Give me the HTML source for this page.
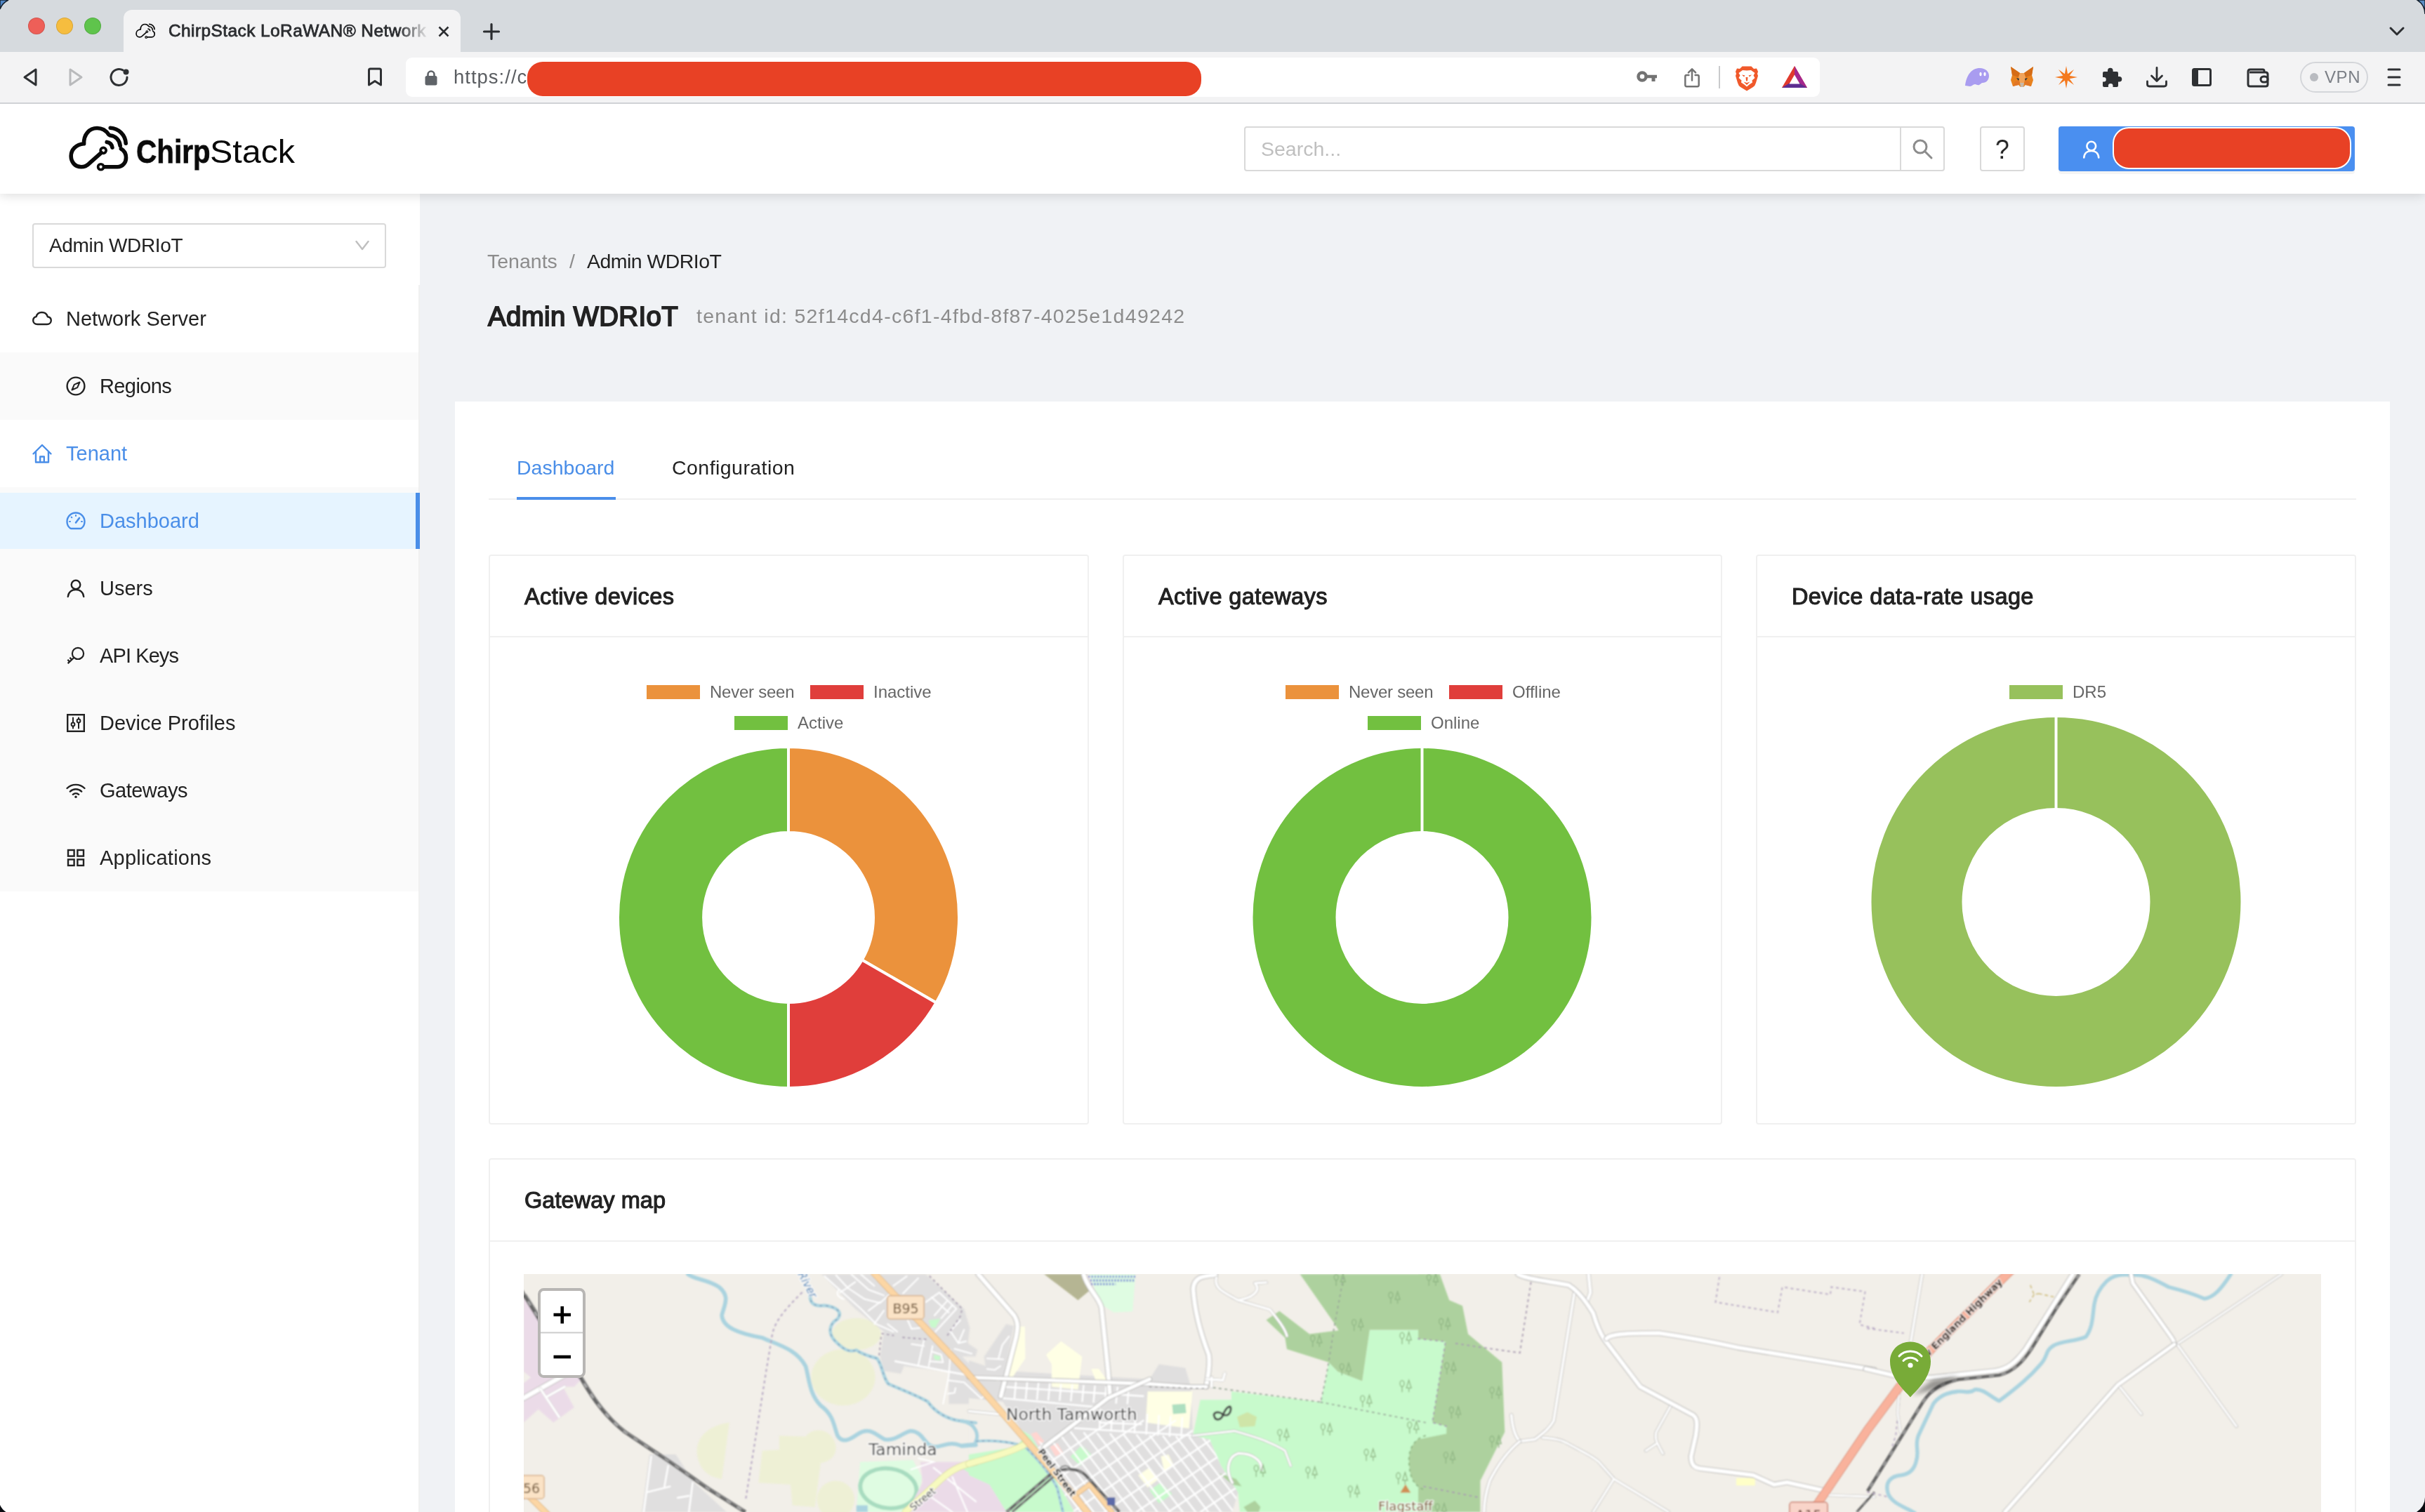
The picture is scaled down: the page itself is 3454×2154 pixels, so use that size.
<!DOCTYPE html>
<html lang="en">
<head>
<meta charset="utf-8">
<title>ChirpStack LoRaWAN® Network Server</title>
<style>
html,body{margin:0;padding:0}
body{width:3454px;height:2154px;position:relative;overflow:hidden;background:#f0f2f5;font-family:"Liberation Sans",sans-serif;color:#222;-webkit-font-smoothing:antialiased}
.abs{position:absolute}
.t{position:absolute;white-space:nowrap;line-height:1;will-change:transform}
svg{position:absolute;overflow:visible}
/* browser chrome */
#tabbar{left:0;top:0;width:3454px;height:74px;background:#d6dade}
#toolbar{left:0;top:74px;width:3454px;height:72px;background:#f3f3f4;border-bottom:2px solid #d0d2d6}
#tab{left:176px;top:14px;width:480px;height:60px;background:#f3f3f4;border-radius:12px 12px 0 0}
#urlbox{left:578px;top:82px;width:2014px;height:56px;background:#fff;border-radius:9px}
.red{background:#e84125}
/* app header */
#hdr{left:0;top:148px;width:3454px;height:128px;background:#fff;box-shadow:0 3px 14px rgba(0,0,0,.13);clip-path:inset(0 0 -60px 0)}
/* sidebar */
#side{left:0;top:276px;width:598px;height:1878px;background:#fff}
.sub{left:0;width:596px;background:#fafafa}
.mi{font-size:29px;color:#222}
.blue{color:#4a8ee8}
/* content */
#page{left:648px;top:572px;width:2756px;height:1600px;background:#fff}
.card{position:absolute;background:#fff;border:2px solid #f0f0f0;border-radius:4px;box-sizing:border-box}
.card .hd{position:absolute;left:0;top:0;right:0;height:114px;border-bottom:2px solid #f0f0f0}
.ct{font-size:32.5px;color:#222;letter-spacing:.4px;-webkit-text-stroke:1.1px #222;margin-left:1px}
.lg{font-size:24px;color:#666}
</style>
</head>
<body>
<div id="side" class="abs"></div>
<!-- ===== BROWSER CHROME ===== -->
<div id="tabbar" class="abs"></div>
<div id="tab" class="abs"></div>
<div id="toolbar" class="abs"></div>
<div id="urlbox" class="abs"></div>

<!-- traffic lights -->
<div class="abs" style="left:40px;top:25px;width:24px;height:24px;border-radius:50%;background:#ee5f58;box-shadow:inset 0 0 0 1px rgba(0,0,0,.12)"></div>
<div class="abs" style="left:80px;top:25px;width:24px;height:24px;border-radius:50%;background:#f6bd3f;box-shadow:inset 0 0 0 1px rgba(0,0,0,.12)"></div>
<div class="abs" style="left:120px;top:25px;width:24px;height:24px;border-radius:50%;background:#5fc44c;box-shadow:inset 0 0 0 1px rgba(0,0,0,.12)"></div>
<!-- tab favicon -->
<svg style="left:187.2px;top:27.4px" width="120" height="33.35" viewBox="0 0 2425 674" fill="none" stroke="#0a0a0a" stroke-width="34" stroke-linecap="round" stroke-linejoin="round">
<path d="M432 388 L318 490 C296 512 270 524 240 524 C180 524 142 478 142 420 C142 360 190 308 266 302 C262 210 320 152 392 152 C440 152 480 178 504 214"/>
<path d="M462 524 H586 C640 524 670 480 670 436 C670 396 650 366 622 350"/>
<circle cx="428" cy="524" r="27" stroke-width="25"/>
<circle cx="452" cy="366" r="27" stroke-width="25"/>
<path d="M486 286 C514 290 534 310 538 338"/>
<path d="M520 222 C570 226 610 268 614 322"/>
<path d="M520 150 C600 154 664 218 668 298"/>
</svg>
<div class="t" id="tabtitle" style="left:240px;top:32px;font-size:24.5px;color:#2b2d30;width:372px;overflow:hidden;-webkit-text-stroke:.8px #2b2d30;letter-spacing:.4px;-webkit-mask-image:linear-gradient(90deg,#000 88%,transparent 100%);mask-image:linear-gradient(90deg,#000 88%,transparent 100%);height:30px">ChirpStack LoRaWAN® Network Server</div>
<svg style="left:624px;top:37px" width="16" height="16" viewBox="0 0 16 16" stroke="#2b2d30" stroke-width="2.6" stroke-linecap="butt"><path d="M1.5 1.5 L14.5 14.5 M14.5 1.5 L1.5 14.5"/></svg>
<svg style="left:688px;top:33px" width="24" height="24" viewBox="0 0 24 24" stroke="#2b2d30" stroke-width="3.2" stroke-linecap="round"><path d="M12 1.5 V22.5 M1.5 12 H22.5"/></svg>
<svg style="left:3402px;top:37px" width="24" height="16" viewBox="0 0 24 16" fill="none" stroke="#2b2d30" stroke-width="3" stroke-linecap="round" stroke-linejoin="round"><path d="M3 3 L12 12 L21 3"/></svg>
<!-- nav -->
<svg style="left:32px;top:96px" width="24" height="28" viewBox="0 0 24 28" fill="none" stroke="#2e3033" stroke-width="3" stroke-linejoin="round"><path d="M19 3 V25 L3 14 Z"/></svg>
<svg style="left:96px;top:96px" width="24" height="28" viewBox="0 0 24 28" fill="none" stroke="#b9babc" stroke-width="3" stroke-linejoin="round"><path d="M4 3 V25 L20 14 Z"/></svg>
<svg style="left:155px;top:95px" width="30" height="30" viewBox="0 0 30 30" fill="none" stroke="#2e3033" stroke-width="3" stroke-linecap="round"><path d="M26 15 A11.5 11.5 0 1 1 20 4.9"/><circle cx="24.5" cy="7.5" r="4" fill="#2e3033" stroke="none"/></svg>
<svg style="left:523px;top:96px" width="22" height="28" viewBox="0 0 22 28" fill="none" stroke="#2e3033" stroke-width="3" stroke-linejoin="round"><path d="M2.5 4 Q2.5 2 4.5 2 H17.5 Q19.5 2 19.5 4 V25 L11 19.5 L2.5 25 Z"/></svg>
<!-- lock -->
<svg style="left:605px;top:100px" width="18" height="22" viewBox="0 0 18 22"><rect x="0.5" y="8" width="17" height="13.5" rx="2.5" fill="#5f6368"/><path d="M4.5 9 V6 A4.5 4.5 0 0 1 13.5 6 V9" fill="none" stroke="#5f6368" stroke-width="2.6"/></svg>
<div class="t" style="left:646px;top:96px;font-size:27.5px;color:#5a5d61;letter-spacing:1px">https://c</div>
<div class="abs red" style="left:751px;top:88px;width:960px;height:49px;border-radius:22px"></div>
<!-- key -->
<svg style="left:2331px;top:99px" width="30" height="22" viewBox="0 0 30 22"><circle cx="8" cy="10" r="5.5" fill="none" stroke="#737373" stroke-width="4.5"/><path d="M13 7.8 H29 V12.2 H26.5 V17 H21.5 V12.2 H13 Z" fill="#737373"/></svg>
<!-- share -->
<svg style="left:2398px;top:96px" width="24" height="29.5" viewBox="0 0 26 32" fill="none" stroke="#737373" stroke-width="2.7" stroke-linecap="round" stroke-linejoin="round"><path d="M8 12 H4.5 Q2.5 12 2.5 14 V27.5 Q2.5 29.5 4.5 29.5 H21.5 Q23.5 29.5 23.5 27.5 V14 Q23.5 12 21.5 12 H18"/><path d="M13 20 V3 M7.5 8 L13 2.5 L18.5 8"/></svg>
<div class="abs" style="left:2448px;top:94px;width:2px;height:32px;background:#c9cacc"></div>
<!-- brave lion -->
<svg style="left:2471px;top:94px" width="34" height="36" viewBox="0 0 34 36"><path d="M17 0.5 L23.5 0.5 L27 4 L31 3.5 L33 8 L32 11 L33 14 L30 24 Q29 28 26 30 L17 35.5 L8 30 Q5 28 4 24 L1 14 L2 11 L1 8 L3 3.5 L7 4 L10.5 0.5 Z" fill="#f0592b"/><path d="M17 6.5 L23 6 L28.5 10 L26.5 13.5 L28.5 17 L24.5 20.5 L25 23.5 L20.5 26.5 L17 29.5 L13.5 26.5 L9 23.5 L9.500 20.5 L5.500 17 L7.500 13.5 L5.500 10 L11 6 Z" fill="#fff"/><path d="M10 12.5 L14.500 13.500 L13 15.500 Z M24 12.500 L19.500 13.500 L21 15.500 Z M15.500 16 H18.500 L18 21 L17 21.800 L16 21 Z M12.500 22.500 L17 24 L21.500 22.500 L17 27 Z" fill="#f0592b"/></svg>
<!-- BAT -->
<svg style="left:2537px;top:93px" width="38" height="34" viewBox="0 0 38 34"><path d="M19 1 L37 32 H1 Z" fill="#e0392d"/><path d="M19 1 L37 32 L19 21 Z" fill="#a3278f"/><path d="M1 32 H37 L19 21 Z" fill="#5e2d91"/><path d="M19 13.5 L26.5 26.5 H11.5 Z" fill="#fff"/></svg>
<!-- phantom ghost -->
<svg style="left:2798px;top:95px" width="36" height="30" viewBox="0 0 36 30"><path d="M1 27 C3 12 10 2 22 2 C30 2 35 7 35 13 C35 19 31 23 26 23 C24 23 23 25 21 26 C19 27 17 25 15 25 C12 25 11 28 8 28 C5 28 4 27 1 27 Z" fill="#a99cf0"/><ellipse cx="23" cy="10.5" rx="1.6" ry="2.8" fill="#fff"/><ellipse cx="29" cy="10.5" rx="1.6" ry="2.8" fill="#fff"/></svg>
<!-- metamask fox -->
<svg style="left:2862px;top:94px" width="36" height="32" viewBox="0 0 36 32"><path d="M2 1 L15 10 H21 L34 1 L32 13 L34 20 L31 29 L23 27 L20 30 H16 L13 27 L5 29 L2 20 L4 13 Z" fill="#e8821e"/><path d="M2 1 L15 10 L13 16 L4 13 Z M34 1 L21 10 L23 16 L32 13 Z" fill="#d56c16"/><path d="M13 16 L15 10 H21 L23 16 L21 24 H15 Z" fill="#f0a35a"/><path d="M15 24 H21 L20 30 H16 Z" fill="#c8b8a8"/><path d="M10 17 L14 18 L13 21 Z M26 17 L22 18 L23 21 Z" fill="#233447"/><path d="M5 29 L13 27 L15 24 L13 21 L8 22 Z M31 29 L23 27 L21 24 L23 21 L28 22 Z" fill="#e27625"/></svg>
<!-- orange star -->
<svg style="left:2926px;top:93px" width="34" height="34" viewBox="-17 -17 34 34"><g fill="#f47a20"><path d="M0 -16 L2.4 -3 L0 0 L-2.4 -3 Z"/><path d="M0 16 L2.4 3 L0 0 L-2.4 3 Z"/><path d="M-16 0 L-3 2.4 L0 0 L-3 -2.4 Z"/><path d="M16 0 L3 2.4 L0 0 L3 -2.4 Z"/><path d="M-11 -11 L-0.5 -3.5 L0 0 L-3.5 -0.5 Z"/><path d="M11 11 L0.5 3.5 L0 0 L3.5 0.5 Z"/><path d="M11 -11 L3.5 -0.5 L0 0 L0.5 -3.5 Z"/><path d="M-11 11 L-3.5 0.5 L0 0 L-0.5 3.5 Z"/><circle r="4.5"/></g></svg>
<!-- puzzle -->
<svg style="left:2990px;top:95px" width="32" height="32" viewBox="0 0 32 32"><path d="M12 5.5 A3.8 3.8 0 0 1 19.6 5.5 V7 H25 Q27 7 27 9 V14 H28.5 A3.8 3.8 0 0 1 28.5 21.6 H27 V27 Q27 29 25 29 H19.5 V27.3 A3.3 3.3 0 0 0 12.9 27.3 V29 H7 Q5 29 5 27 V21.5 H6.5 A3.3 3.3 0 0 0 6.5 14.9 H5 V9 Q5 7 7 7 H12 Z" fill="#2e3033"/></svg>
<!-- download -->
<svg style="left:3056px;top:94px" width="32" height="32" viewBox="0 0 32 32" fill="none" stroke="#2e3033" stroke-width="2.8" stroke-linecap="round" stroke-linejoin="round"><path d="M16 2.5 V21 M8.5 14 L16 21.5 L23.5 14"/><path d="M2.5 22 V26 Q2.5 29 5.5 29 H26.5 Q29.5 29 29.5 26 V22"/></svg>
<!-- sidebar icon -->
<svg style="left:3122px;top:97px" width="28" height="26" viewBox="0 0 28 26"><rect x="1.5" y="1.5" width="25" height="23" rx="2" fill="none" stroke="#2e3033" stroke-width="3"/><rect x="1.5" y="1.5" width="7.5" height="23" fill="#2e3033"/></svg>
<!-- wallet -->
<svg style="left:3200px;top:97px" width="32" height="28" viewBox="0 0 32 28" fill="none" stroke="#2e3033" stroke-width="3" stroke-linejoin="round"><path d="M25 6 V4 Q25 2 23 2 H5 Q2 2 2 5 V23 Q2 26 5 26 H27 Q30 26 30 23 V9 Q30 6 27 6 H4"/><rect x="20" y="12" width="10" height="8" rx="4"/></svg>
<!-- VPN pill -->
<div class="abs" style="left:3276px;top:88px;width:97px;height:44px;border:2px solid #d4d6da;border-radius:22px;box-sizing:border-box"></div>
<div class="abs" style="left:3290px;top:104px;width:12px;height:12px;border-radius:50%;background:#b9bbc0"></div>
<div class="t" style="left:3311px;top:98px;font-size:24px;color:#7b7f86;letter-spacing:.6px">VPN</div>
<!-- hamburger -->
<svg style="left:3400px;top:96px" width="20" height="28" viewBox="0 0 20 28" stroke="#2e3033" stroke-width="3" stroke-linecap="round"><path d="M2 3 H18 M2 14 H18 M2 25 H18"/></svg>


<!-- ===== APP HEADER ===== -->

<div id="hdr" class="abs"></div>
<!-- logo -->
<svg style="left:80px;top:160px" width="360" height="100" viewBox="0 0 2425 674" fill="none" stroke="#0a0a0a" stroke-width="38" stroke-linecap="round" stroke-linejoin="round">
<path d="M432 388 L318 490 C296 512 270 524 240 524 C180 524 142 478 142 420 C142 360 190 308 266 302 C262 210 320 152 392 152 C440 152 480 178 504 214"/>
<path d="M462 524 H586 C640 524 670 480 670 436 C670 396 650 366 622 350"/>
<circle cx="428" cy="524" r="27" stroke-width="25"/>
<circle cx="452" cy="366" r="27" stroke-width="25"/>
<path d="M486 286 C514 290 534 310 538 338"/>
<path d="M520 222 C570 226 610 268 614 322"/>
<path d="M520 150 C600 154 664 218 668 298"/>
</svg>
<div class="t" style="left:194px;top:192px;font-size:47px;font-weight:bold;color:#0a0a0a;-webkit-text-stroke:.8px #0a0a0a;transform-origin:0 0;transform:scaleX(.86)">Chirp</div>
<div class="t" style="left:299px;top:192px;font-size:47px;color:#0a0a0a;transform-origin:0 0;transform:scaleX(1.03)">Stack</div>
<!-- search -->
<div class="abs" style="left:1772px;top:180px;width:998px;height:64px;border:2px solid #d9d9d9;border-radius:4px;box-sizing:border-box;background:#fff"></div>
<div class="abs" style="left:2706px;top:180px;width:2px;height:64px;background:#d9d9d9"></div>
<div class="t" style="left:1796px;top:197.5px;font-size:28.5px;color:#bfbfbf">Search...</div>
<svg style="left:2722px;top:196px" width="32" height="32" viewBox="0 0 32 32" fill="none" stroke="#8c8c8c" stroke-width="3" stroke-linecap="round"><circle cx="13" cy="13" r="9"/><path d="M20 20 L29 29"/></svg>
<!-- help -->
<div class="abs" style="left:2820px;top:180px;width:64px;height:64px;border:2px solid #d9d9d9;border-radius:4px;box-sizing:border-box;background:#fff"></div>
<div class="t" style="left:2841px;top:193px;font-size:39px;color:#222;transform:scaleX(.92);transform-origin:50% 50%">?</div>
<!-- user btn -->
<div class="abs" style="left:2932px;top:180px;width:422px;height:64px;border-radius:4px;background:#4a8ff0;box-shadow:0 4px 0 rgba(0,0,0,.045)"></div>
<svg style="left:2965.5px;top:198.500px" width="25.5" height="27.3" viewBox="0 0 28 30" fill="none" stroke="#fff" stroke-width="2.9" stroke-linecap="round"><circle cx="14" cy="10" r="7"/><path d="M2.5 28 C3 21 8 17.5 14 17.5 C20 17.5 25 21 25.5 28"/></svg>
<div class="abs red" style="left:3009px;top:181px;width:340px;height:60px;border-radius:23px;border:2px solid #fff;box-sizing:border-box"></div>


<!-- ===== SIDEBAR ===== -->


<div class="abs" style="left:596px;top:406px;width:2px;height:1748px;background:#f0f0f0"></div>
<div class="abs sub" style="top:502px;height:96px"></div>
<div class="abs sub" style="top:694px;height:576px"></div>
<div class="abs" style="left:0;top:702px;width:598px;height:80px;background:#e6f4ff"></div>
<div class="abs" style="left:592px;top:702px;width:6px;height:80px;background:#4a8ee8"></div>
<!-- tenant select -->
<div class="abs" style="left:46px;top:318px;width:504px;height:64px;border:2px solid #d9d9d9;border-radius:4px;box-sizing:border-box;background:#fff"></div>
<div class="t" style="left:70px;top:336px;font-size:28px;color:#222;letter-spacing:-.35px">Admin WDRIoT</div>
<svg style="left:506px;top:342px" width="20" height="16" viewBox="0 0 20 16" fill="none" stroke="#bfbfbf" stroke-width="2.4" stroke-linecap="round" stroke-linejoin="round"><path d="M1.5 2 L10 13 L18.5 2"/></svg>
<div class="t mi " style="left:94px;top:440px">Network Server</div>
<div class="t mi " style="left:142px;top:536px;letter-spacing:-.6px">Regions</div>
<div class="t mi blue" style="left:94px;top:632px">Tenant</div>
<div class="t mi blue" style="left:142px;top:728px">Dashboard</div>
<div class="t mi " style="left:142px;top:824px">Users</div>
<div class="t mi " style="left:142px;top:920px;letter-spacing:-.9px">API Keys</div>
<div class="t mi " style="left:142px;top:1016px">Device Profiles</div>
<div class="t mi " style="left:142px;top:1112px;letter-spacing:-.5px">Gateways</div>
<div class="t mi " style="left:142px;top:1208px;letter-spacing:.25px">Applications</div>
<!--SIDE-ICONS-START--><svg style="left:46px;top:440px" width="28" height="28" viewBox="0 0 28 28" fill="none" stroke="#222" stroke-width="2.4" stroke-linecap="round" stroke-linejoin="round"><path d="M7.5 22 C3.5 22 1.2 19.5 1.2 16.5 C1.2 13.8 3 11.8 5.6 11.2 C6.6 7.2 9.8 5 13.6 5 C17.6 5 20.8 7.4 21.8 11.2 C24.8 11.6 26.8 13.8 26.8 16.6 C26.8 19.6 24.4 22 21 22 Z"/></svg>
<svg style="left:94px;top:536px" width="28" height="28" viewBox="0 0 28 28" fill="none" stroke="#222" stroke-width="2.4" stroke-linecap="round" stroke-linejoin="round"><circle cx="14" cy="14" r="12.4"/><path d="M19.5 8.5 L16.2 16.2 L8.5 19.5 L11.8 11.8 Z" stroke-width="2"/></svg>
<svg style="left:46px;top:632px" width="28" height="28" viewBox="0 0 28 28" fill="none" stroke="#4a8ee8" stroke-width="2.4" stroke-linecap="round" stroke-linejoin="round"><path d="M1.5 14.5 L14 2 L26.5 14.5"/><path d="M5 12 V26.5 H23 V12"/><path d="M11.2 26 V18.5 H16.8 V26"/></svg>
<svg style="left:94px;top:728px" width="28" height="28" viewBox="0 0 28 28" fill="none" stroke="#4a8ee8" stroke-width="2.4" stroke-linecap="round" stroke-linejoin="round"><path d="M6 24.5 C3 22.3 1.5 18.8 1.5 15 C1.5 8.1 7.1 2.5 14 2.5 C20.9 2.5 26.5 8.1 26.5 15 C26.5 18.8 25 22.3 22 24.5 Q21.3 25 20.5 25 H7.5 Q6.7 25 6 24.5 Z"/><path d="M14 16.5 L19 10" stroke-width="2.6"/><path d="M14 6 V7 M7.6 8.6 L8.3 9.3 M5 15 H6 M22 15 H23" stroke-width="2"/></svg>
<svg style="left:94px;top:824px" width="28" height="28" viewBox="0 0 28 28" fill="none" stroke="#222" stroke-width="2.4" stroke-linecap="round" stroke-linejoin="round"><circle cx="14" cy="9" r="6.3"/><path d="M2.8 26 C3.3 19.8 8 16 14 16 C20 16 24.7 19.8 25.2 26"/></svg>
<svg style="left:94px;top:920px" width="28" height="28" viewBox="0 0 28 28" fill="none" stroke="#222" stroke-width="2.4" stroke-linecap="round" stroke-linejoin="round"><circle cx="17" cy="10.9" r="8.1" stroke-width="2.2"/><path d="M11.2 17 L2.6 25.2 M8.2 19.8 L5.4 16.8 M5.1 22.7 L2.4 19.8" stroke-linecap="butt" stroke-width="2.3"/></svg>
<svg style="left:94px;top:1016px" width="28" height="28" viewBox="0 0 28 28" fill="none" stroke="#222" stroke-width="2.4" stroke-linecap="round" stroke-linejoin="round"><rect x="2.2" y="2.2" width="23.6" height="23.6" stroke-linejoin="miter"/><path d="M10 6.5 V13 M10 19 V21.5 M18 6.500 V8 M18 14 V21.5" stroke-width="2"/><circle cx="10" cy="16" r="2.4" stroke-width="2"/><circle cx="18" cy="11" r="2.4" stroke-width="2"/></svg>
<svg style="left:94px;top:1112px" width="28" height="28" viewBox="0 0 28 28" fill="none" stroke="#222" stroke-width="2.4" stroke-linecap="round" stroke-linejoin="round"><path d="M1.5 11 C8.500 4.200 19.500 4.200 26.500 11"/><path d="M5.800 15.600 C10.400 11.200 17.600 11.200 22.200 15.600"/><path d="M9.800 19.800 C12.200 17.600 15.800 17.600 18.200 19.800"/><circle cx="14" cy="23.300" r="1.700" fill="#222" stroke="none"/></svg>
<svg style="left:94px;top:1208px" width="28" height="28" viewBox="0 0 28 28" fill="none" stroke="#222" stroke-width="2.4" stroke-linecap="round" stroke-linejoin="round"><rect stroke-linejoin="miter" x="3" y="3" width="8.600" height="8.600"/><rect stroke-linejoin="miter" x="16.400" y="3" width="8.600" height="8.600"/><rect stroke-linejoin="miter" x="3" y="16.400" width="8.600" height="8.600"/><rect stroke-linejoin="miter" x="16.400" y="16.400" width="8.600" height="8.600"/></svg>
<!--SIDE-ICONS-END-->


<!-- ===== CONTENT ===== -->
<div id="page" class="abs"></div>

<!-- breadcrumb -->
<div class="t" style="left:694px;top:358px;font-size:28.5px;color:#8c8c8c">Tenants</div>
<div class="t" style="left:811px;top:358px;font-size:28.5px;color:#8c8c8c">/</div>
<div class="t" style="left:836px;top:358px;font-size:28.5px;color:#222;letter-spacing:-.55px">Admin WDRIoT</div>
<div class="t" style="left:693px;top:432px;font-size:38.5px;color:#222;letter-spacing:.3px;-webkit-text-stroke:1.8px #222;margin-left:2px">Admin WDRIoT</div>
<div class="t" style="left:992px;top:436px;font-size:28.5px;color:#8c8c8c;letter-spacing:1.3px">tenant id: 52f14cd4-c6f1-4fbd-8f87-4025e1d49242</div>
<!-- tabs -->
<div class="abs" style="left:696px;top:710px;width:2660px;height:2px;background:#f0f0f0"></div>
<div class="t blue" style="left:736px;top:652px;font-size:28.5px">Dashboard</div>
<div class="abs" style="left:736px;top:708px;width:141px;height:4px;background:#4a8eea"></div>
<div class="t" style="left:957px;top:652px;font-size:28.5px;color:#222;letter-spacing:.45px">Configuration</div>
<!-- cards -->
<div class="card" style="left:696px;top:790px;width:854.67px;height:812px"><div class="hd"></div></div>
<div class="card" style="left:1598.67px;top:790px;width:854.67px;height:812px"><div class="hd"></div></div>
<div class="card" style="left:2501.33px;top:790px;width:854.67px;height:812px"><div class="hd"></div></div>
<div class="t ct" style="left:746px;top:834px">Active devices</div>
<div class="t ct" style="left:1649px;top:834px">Active gateways</div>
<div class="t ct" style="left:2551px;top:834px">Device data-rate usage</div>
<!-- legends -->
<div class="abs" style="left:921px;top:976px;width:76px;height:20px;background:#eb923c"></div>
<div class="t lg" style="left:1011px;top:974px;letter-spacing:-.25px">Never seen</div>
<div class="abs" style="left:1154px;top:976px;width:76px;height:20px;background:#e03e3b"></div>
<div class="t lg" style="left:1244px;top:974px">Inactive</div>
<div class="abs" style="left:1046px;top:1020px;width:76px;height:20px;background:#72c040"></div>
<div class="t lg" style="left:1136px;top:1018px">Active</div>

<div class="abs" style="left:1831px;top:976px;width:76px;height:20px;background:#eb923c"></div>
<div class="t lg" style="left:1921px;top:974px;letter-spacing:-.25px">Never seen</div>
<div class="abs" style="left:2064px;top:976px;width:76px;height:20px;background:#e03e3b"></div>
<div class="t lg" style="left:2154px;top:974px">Offline</div>
<div class="abs" style="left:1948px;top:1020px;width:76px;height:20px;background:#72c040"></div>
<div class="t lg" style="left:2038px;top:1018px">Online</div>

<div class="abs" style="left:2862px;top:976px;width:76px;height:20px;background:#97c15c"></div>
<div class="t lg" style="left:2952px;top:974px">DR5</div>
<!--DONUTS-START--><svg style="left:0;top:0" width="3454" height="2154" viewBox="0 0 3454 2154"><path d="M1123.00 1064.00 A243 243 0 0 1 1333.44 1428.50 L1227.79 1367.50 A121 121 0 0 0 1123.00 1186.00 Z" fill="#eb923c" stroke="#fff" stroke-width="4" stroke-linejoin="round"/><path d="M1333.44 1428.50 A243 243 0 0 1 1123.00 1550.00 L1123.00 1428.00 A121 121 0 0 0 1227.79 1367.50 Z" fill="#e03e3b" stroke="#fff" stroke-width="4" stroke-linejoin="round"/><path d="M1123.00 1550.00 A243 243 0 0 1 1123.00 1064.00 L1123.00 1186.00 A121 121 0 0 0 1123.00 1428.00 Z" fill="#72c040" stroke="#fff" stroke-width="4" stroke-linejoin="round"/></svg><svg style="left:0;top:0" width="3454" height="2154" viewBox="0 0 3454 2154"><circle cx="2025.5" cy="1307" r="182.0" fill="none" stroke="#72c040" stroke-width="118"/><path d="M2025.5 1063 V1187" stroke="#fff" stroke-width="4"/></svg><svg style="left:0;top:0" width="3454" height="2154" viewBox="0 0 3454 2154"><circle cx="2928.5" cy="1285" r="198.5" fill="none" stroke="#97c15c" stroke-width="129"/><path d="M2928.5 1019 V1154" stroke="#fff" stroke-width="4"/></svg><!--DONUTS-END-->
<!-- gateway map card -->
<div class="card" style="left:696px;top:1650px;width:2660px;height:600px"><div class="hd" style="height:115px"></div></div>
<div class="t ct" style="left:746px;top:1694px;letter-spacing:.05px">Gateway map</div>


<!--MAP-START--><svg style="left:0;top:0" width="3454" height="2154" viewBox="0 0 3454 2154">
<defs><clipPath id="mapclip"><rect x="746" y="1815" width="2560" height="340"/></clipPath>
<clipPath id="gridclip"><path d="M330 900 L420 960 L740 700 L960 610 L1180 640 L1190 900 L1280 920 L1340 1060 L1430 1200 L1400 1306 L560 1306Z"/></clipPath>
<filter id="sblur" x="-20%" y="-40%" width="140%" height="180%"><feGaussianBlur stdDeviation="3.2"/></filter>
<filter id="mblur" x="-1%" y="-1%" width="102%" height="102%"><feGaussianBlur stdDeviation="0.9"/></filter></defs>
<g clip-path="url(#mapclip)"><rect x="746" y="1815" width="2560" height="340" fill="#f2efe9"/>
<g filter="url(#mblur)">
<g transform="translate(740,1804) scale(0.26804)"><path d="M22 170 L110 300 L330 600 L290 640 L230 640 L290 750 L180 830 L100 760 L22 830Z" fill="#ebdbe8"/><path d="M22 620 L60 590 L22 560Z" fill="#f2efe9"/><ellipse cx="1790" cy="360" rx="130" ry="85" fill="#eef0d5"/><ellipse cx="1720" cy="590" rx="170" ry="150" fill="#eef0d5"/><path d="M1115 830 C980 850 930 930 945 1010 C960 1080 1000 1120 1075 1130Z" fill="#eef0d5"/><path d="M1380 900 L1520 905 C1560 850 1660 860 1680 950 C1690 1010 1640 1040 1600 1045 L1570 1280 L1450 1270 L1440 1160 L1270 1150 L1290 980 L1380 975Z" fill="#eef0d5"/><circle cx="1680" cy="1240" r="100" fill="#eef0d5"/><path d="M690 1000 L830 1000 L930 1150 L1100 1306 L650 1306Z" fill="#e0dfdf"/><path d="M1810 1040 L2090 1030 L2140 1120 L2100 1306 L1790 1306Z" fill="#dffce2"/><ellipse cx="1960" cy="1180" rx="150" ry="105" fill="none" stroke="#a8dcc0" stroke-width="22" transform="rotate(8 1960 1180)"/><path d="M2130 1040 L2425 1040 L2425 1306 L2060 1306 L2140 1150Z" fill="#ebdbe8"/><path d="M2330 1060 L2425 1040 L2425 1120Z" fill="#c8facc"/><path d="M1790 1270 L1850 1270 L1850 1306 L1790 1306Z" fill="#aad3df"/></g>
<g transform="translate(1150,1810) scale(0.13609)"><path d="M150 40 L1240 40 L1420 200 L1640 400 L1700 600 L1680 760 L1780 830 L1760 900 L1620 900 L2000 1300 L2000 1396 L1480 1396 L1480 1060 L1010 1000 L980 1080 L800 1050 L760 900 L800 640 L500 400Z" fill="#e0dfdf"/><path d="M1850 900 L2080 560 L2160 580 L2100 900 L2050 1100 L1870 1060Z" fill="#e0dfdf"/><path d="M1270 520 L1390 505 L1340 600 L1290 590Z" fill="#c8facc"/><path d="M1320 880 L1400 900 L1380 940 L1330 930Z" fill="#c8facc"/></g>
<g transform="translate(1380,1804) scale(0.26804)"><path d="M0 500 L120 540 L260 560 L960 600 L1010 520 L1150 540 L1180 640 L1190 900 L1280 920 L1340 1060 L1430 1200 L1400 1306 L560 1306 L330 900 L0 700Z" fill="#e0dfdf"/><path d="M0 700 L330 900 L560 1306 L0 1306Z" fill="#c8facc"/><path d="M0 1110 L110 1160 L200 1306 L0 1306Z" fill="#ebdbe8"/><path d="M0 700 L180 720 L300 900 L250 960 L0 1000Z" fill="#f2efe9"/><path d="M1230 710 L1395 710 L1395 665 L1870 722 L1900 580 L1912 510 L1960 560 L2090 610 L2130 338 L2425 338 L2425 1306 L1440 1306 L1430 1200 L1340 1060 L1280 920 L1190 900Z" fill="#c8facc"/><path d="M1760 42 L2425 42 L2425 338 L2130 338 L2090 610 L1960 560 L1912 510 L1690 440 L1680 380 L1580 285 L1650 238 L1810 360 L1965 340 L1940 300Z" fill="#add19e"/><path d="M2425 900 C2360 920 2330 980 2340 1060 C2345 1130 2370 1170 2425 1190Z" fill="#add19e"/><path d="M1330 1100 L1420 1130 L1450 1170 L1400 1160Z" fill="#add19e"/><path d="M1460 1280 L1520 1245 L1550 1280 L1540 1306 L1480 1306Z" fill="#add19e"/><path d="M400 42 L610 42 L640 130 L580 180Z" fill="#b5b593"/><path d="M640 42 L885 42 L870 240 L770 245 L700 200Z" fill="#dffce2"/><path d="M620 55 H885 M630 75 H880 M650 95 H780" stroke="#2d3bd0" stroke-width="12" stroke-dasharray="7 9" fill="none" opacity=".8"/><path d="M270 320 L298 320 L300 490 L225 600 L205 590 L240 400Z" fill="#ffffe5"/><path d="M410 470 L490 398 L602 480 L580 655 L440 640 L440 520Z" fill="#ffffe5"/><path d="M650 545 L690 545 L730 600 L720 630 L680 620Z" fill="#ffffe5"/><path d="M950 665 L1188 665 L1170 862 L940 830Z" fill="#ffffe5"/><path d="M1080 735 L1150 730 L1155 780 L1085 785Z" fill="#aedfc0"/><path d="M900 1110 L960 1070 L1010 1130 L950 1175Z" fill="#ffffe5"/><path d="M1020 1010 L1060 1000 L1090 1060 L1040 1095Z" fill="#ffffe5"/><path d="M330 890 L360 880 L400 930 L370 950 M430 960 L470 940 L500 990 L460 1010Z" fill="#ffd6d1"/><path d="M540 1010 L600 950 L650 1000 L590 1060Z" fill="#c8facc"/><path d="M960 1190 L1020 1150 L1080 1210 L1010 1260Z" fill="#c8facc"/><path d="M1425 800 L1480 775 L1530 800 L1520 850 L1440 855Z" fill="#cfe5a8"/></g>
<g transform="translate(2020,1804) scale(0.26804)"><path d="M0 42 L115 42 L165 180 L235 210 L265 360 L445 510 L460 880 L330 1140 L330 1306 L0 1306Z" fill="#add19e"/><path d="M0 385 L145 400 L75 830 L150 850 L150 890 L0 920Z" fill="#c8facc"/><path d="M1690 1125 L1790 1125 L1790 1165 L1690 1165Z" fill="#ffffc8"/></g>
<g transform="translate(740,1804) scale(0.26804)"><path d="M895 42 C930 70 1000 70 1060 110 C1120 160 1090 200 1075 260 C1080 330 1180 360 1290 380 C1380 420 1470 440 1520 530 C1540 600 1540 680 1600 740 C1670 790 1670 850 1690 900 C1720 950 1770 910 1800 890 C1860 850 1900 900 1940 920 C2000 930 2040 880 2080 875 C2150 880 2150 960 2210 960 C2270 950 2290 930 2350 955 L2425 950" fill="none" stroke="#aad3df" stroke-width="21" stroke-linecap="round" stroke-linejoin="round"/><path d="M1545 150 C1540 200 1570 215 1620 208 C1680 215 1720 240 1690 280 C1640 310 1640 360 1680 400 C1720 440 1750 460 1790 445 C1820 470 1870 480 1900 490 C1930 530 1930 590 1960 625 C2040 660 2120 690 2170 720 C2210 780 2280 810 2330 820 L2425 832" fill="none" stroke="#aad3df" stroke-width="17" stroke-linecap="round" stroke-linejoin="round"/><path d="M1545 150 C1540 200 1570 215 1620 208 C1680 215 1720 240 1690 280 C1640 310 1640 360 1680 400 C1720 440 1750 460 1790 445 C1820 470 1870 480 1900 490 C1930 530 1930 590 1960 625 C2040 660 2120 690 2170 720 C2210 780 2280 810 2330 820 L2425 832" fill="none" stroke="#7d98b8" stroke-width="5" stroke-dasharray="9 22" stroke-linecap="round"/><path d="M1500 140 C1400 240 1350 300 1340 380 L1310 560 L1280 750 L1240 1000 L1200 1250" fill="none" stroke="#b7a9c4" stroke-width="8" stroke-dasharray="9 22" stroke-linecap="round"/><path d="M700 1010 L660 1306 M790 1060 L770 1170 M920 1150 L900 1306 M680 1200 L800 1170 M840 1230 L900 1220" fill="none" stroke="#fff" stroke-width="9" stroke-linecap="round"/><path d="M2200 1070 L2425 1250 M2300 1120 L2380 1306 M2150 1200 L2300 1306 M2080 1080 L2200 1040 L2120 1020" fill="none" stroke="#fff" stroke-width="8" stroke-linecap="round"/><path d="M22 700 L270 560" fill="none" stroke="#bcbbb9" stroke-width="32" stroke-linecap="round" stroke-linejoin="round"/><path d="M22 700 L270 560" fill="none" stroke="#fff" stroke-width="24" stroke-linecap="round" stroke-linejoin="round"/><path d="M110 650 L210 800 M150 690 L240 640" fill="none" stroke="#bcbbb9" stroke-width="15" stroke-linecap="round" stroke-linejoin="round"/><path d="M110 650 L210 800 M150 690 L240 640" fill="none" stroke="#fff" stroke-width="13" stroke-linecap="round" stroke-linejoin="round"/><path d="M2425 1040 C2330 1060 2280 1090 2210 1160 L2050 1306" fill="none" stroke="#d8d99a" stroke-width="36" stroke-linecap="round" stroke-linejoin="round"/><path d="M2425 1040 C2330 1060 2280 1090 2210 1160 L2050 1306" fill="none" stroke="#f7fabf" stroke-width="31" stroke-linecap="round" stroke-linejoin="round"/><path d="M60 1230 L150 1320" fill="none" stroke="#d9b27c" stroke-width="34" stroke-linecap="round" stroke-linejoin="round"/><path d="M60 1230 L150 1320" fill="none" stroke="#fcd6a4" stroke-width="28" stroke-linecap="round" stroke-linejoin="round"/><path d="M10 130 L110 290 L330 600 C400 720 460 800 560 880 L800 1040 L1000 1180 L1200 1306" fill="none" stroke="#666" stroke-width="20" stroke-linejoin="round"/><path d="M10 130 L110 290 L330 600 C400 720 460 800 560 880 L800 1040 L1000 1180 L1200 1306" fill="none" stroke="#b9b9b9" stroke-width="8" stroke-dasharray="26 40" stroke-linejoin="round"/><path d="M20 160 L110 300 L320 600 C390 720 450 800 550 890 L790 1050 L990 1190 L1180 1306" fill="none" stroke="#8a8a8a" stroke-width="5" transform="translate(14,-12)"/></g>
<g transform="translate(1150,1810) scale(0.13609)"><path d="M180 60 L560 400 L720 560 L900 640 M300 50 L420 180 L600 300 L760 340 L860 250 M460 40 L640 200 L800 260 M560 40 L700 160 M330 200 Q280 260 380 300 M640 420 L760 330 M700 560 L800 420 M840 560 L940 640 M420 180 L340 230 M500 120 L430 170 M900 160 L1040 60 M1000 240 L1160 80 M1240 330 L1380 230 L1560 400 L1340 640 M1300 280 L1480 440 M1330 470 L1460 320 M1400 500 L1520 360 M1490 640 L1600 520 M1500 640 L1580 760 L1640 620 M1580 760 L1660 740 M1540 820 L1720 870 M1050 520 L1090 610 L1180 600 M1090 770 L1220 790 M1220 730 L1160 990 M1310 790 L1270 1000 M1280 950 L1420 960 L1400 880 L1310 850 M1500 830 L1480 1100 L1420 1396 M1480 1150 L1640 1170 L1820 1340 L1860 1300 M1470 1290 L1540 1280 L1550 1230 M2110 690 L2040 780 L2000 920 M1880 920 L2050 930 M1880 1030 L1960 1040 L2020 1000" fill="none" stroke="#fff" stroke-width="15" stroke-linecap="round" stroke-linejoin="round"/><path d="M920 950 L1480 1060 L2000 1150" fill="none" stroke="#fff" stroke-width="20" stroke-linecap="round"/><path d="M1280 60 L1330 110 L1620 400 L1600 480 L1450 700 M780 660 L900 680 M1000 700 L1240 720 M770 700 L750 900" fill="none" stroke="#a89bb0" stroke-width="14" stroke-dasharray="16 40" stroke-linecap="round"/></g>
<g transform="translate(1380,1804) scale(0.26804)"><g clip-path="url(#gridclip)"><path d="M-300 1306 L420 818 M-130 1306 L590 818 M40 1306 L760 818 M210 1306 L930 818 M380 1306 L1100 818 M550 1306 L1270 818 M720 1306 L1440 818 M890 1306 L1610 818 M1060 1306 L1780 818 M1230 1306 L1950 818 M1400 1306 L2120 818 M1570 1306 L2290 818 M120 861 L460 1306 M190 864 L530 1309 M260 867 L600 1312 M330 870 L670 1315 M400 873 L740 1318 M470 876 L810 1321 M540 879 L880 1324 M610 882 L950 1327 M680 885 L1020 1330 M750 888 L1090 1333 M820 891 L1160 1336 M890 894 L1230 1339 M960 897 L1300 1342 M1030 900 L1370 1345 M1100 903 L1440 1348 M1170 906 L1510 1351 M1240 909 L1580 1354 M1310 912 L1650 1357 M1380 915 L1720 1360 " fill="none" stroke="#fff" stroke-width="9"/></g><path d="M180 640 L930 690 M170 700 L700 750 M560 860 L1190 900 M690 830 L920 840 M190 610 L182 700 M250 613 L242 703 M310 616 L302 706 M370 619 L362 709 M430 622 L422 712 M490 625 L482 715 M550 628 L542 718 M610 631 L602 721 M670 634 L662 724 M730 637 L722 727 M790 640 L782 730 M850 643 L842 733 M700 760 L694 870 M762 766 L756 876 M824 772 L818 882 M886 778 L880 888 M948 784 L942 894 M1010 790 L1004 900 M1072 796 L1066 906 M1134 802 L1128 912 " fill="none" stroke="#fff" stroke-width="9"/><path d="M0 770 L200 790" fill="none" stroke="#bcbbb9" stroke-width="17" stroke-linecap="round" stroke-linejoin="round"/><path d="M0 770 L200 790" fill="none" stroke="#fff" stroke-width="13" stroke-linecap="round" stroke-linejoin="round"/><path d="M50 42 L240 260 C265 300 260 330 250 380 L170 690" fill="none" stroke="#bcbbb9" stroke-width="30" stroke-linecap="round" stroke-linejoin="round"/><path d="M50 42 L240 260 C265 300 260 330 250 380 L170 690" fill="none" stroke="#fff" stroke-width="22" stroke-linecap="round" stroke-linejoin="round"/><path d="M610 42 C630 120 690 160 705 220 L740 560 L750 690" fill="none" stroke="#bcbbb9" stroke-width="30" stroke-linecap="round" stroke-linejoin="round"/><path d="M610 42 C630 120 690 160 705 220 L740 560 L750 690" fill="none" stroke="#fff" stroke-width="22" stroke-linecap="round" stroke-linejoin="round"/><path d="M1310 46 C1240 50 1195 60 1192 120 C1200 250 1240 380 1275 470 C1285 540 1265 600 1262 640" fill="none" stroke="#bcbbb9" stroke-width="30" stroke-linecap="round" stroke-linejoin="round"/><path d="M1310 46 C1240 50 1195 60 1192 120 C1200 250 1240 380 1275 470 C1285 540 1265 600 1262 640" fill="none" stroke="#fff" stroke-width="22" stroke-linecap="round" stroke-linejoin="round"/><path d="M0 590 L960 625 L1180 640 L1262 640" fill="none" stroke="#bcbbb9" stroke-width="26" stroke-linecap="round" stroke-linejoin="round"/><path d="M0 590 L960 625 L1180 640 L1262 640" fill="none" stroke="#fff" stroke-width="18" stroke-linecap="round" stroke-linejoin="round"/><path d="M960 600 L740 700 L400 960" fill="none" stroke="#bcbbb9" stroke-width="28" stroke-linecap="round" stroke-linejoin="round"/><path d="M960 600 L740 700 L400 960" fill="none" stroke="#fff" stroke-width="20" stroke-linecap="round" stroke-linejoin="round"/><path d="M1262 600 L1350 605 L1360 570 M1290 590 L1290 640" fill="none" stroke="#bcbbb9" stroke-width="17" stroke-linecap="round" stroke-linejoin="round"/><path d="M1262 600 L1350 605 L1360 570 M1290 590 L1290 640" fill="none" stroke="#fff" stroke-width="13" stroke-linecap="round" stroke-linejoin="round"/><path d="M1315 60 C1300 120 1360 140 1430 180 C1500 170 1560 130 1520 90 L1580 85 M1430 180 L1600 230 C1640 280 1680 330 1690 370" fill="none" stroke="#bcbbb9" stroke-width="17" stroke-linecap="round" stroke-linejoin="round"/><path d="M1315 60 C1300 120 1360 140 1430 180 C1500 170 1560 130 1520 90 L1580 85 M1430 180 L1600 230 C1640 280 1680 330 1690 370" fill="none" stroke="#fff" stroke-width="12" stroke-linecap="round" stroke-linejoin="round"/><path d="M1190 900 L1410 875 C1500 900 1600 930 1680 980 L1710 1060" fill="none" stroke="#bcbbb9" stroke-width="15" stroke-linecap="round" stroke-linejoin="round"/><path d="M1190 900 L1410 875 C1500 900 1600 930 1680 980 L1710 1060" fill="none" stroke="#fff" stroke-width="10" stroke-linecap="round" stroke-linejoin="round"/><path d="M1400 1150 C1360 1080 1380 1010 1430 995 C1500 990 1560 1030 1555 1080" fill="none" stroke="#bcbbb9" stroke-width="17" stroke-linecap="round" stroke-linejoin="round"/><path d="M1400 1150 C1360 1080 1380 1010 1430 995 C1500 990 1560 1030 1555 1080" fill="none" stroke="#fff" stroke-width="12" stroke-linecap="round" stroke-linejoin="round"/><path d="M1300 645 L1870 722 L1900 580 L1912 510 M1870 722 L2425 830 M1990 60 L1940 330 L1912 510" fill="none" stroke="#9aa89a" stroke-width="7" stroke-dasharray="9 22" stroke-linecap="round"/><path d="M2425 900 C2360 920 2330 980 2340 1060 C2345 1130 2370 1170 2425 1190" fill="none" stroke="#8fb583" stroke-width="7" stroke-dasharray="9 22" stroke-linecap="round"/><path d="M960 640 L1262 650" fill="none" stroke="#9a9a9a" stroke-width="6" stroke-dasharray="9 22" stroke-linecap="round"/><path d="M-40 822 C40 835 60 900 30 945 L-40 952" fill="none" stroke="#aad3df" stroke-width="19" stroke-linecap="round" stroke-linejoin="round"/><path d="M40 930 C150 920 250 940 300 960 C380 1040 430 1100 470 1180 L500 1306" fill="none" stroke="#aad3df" stroke-width="15" stroke-linecap="round" stroke-linejoin="round"/><path d="M40 930 C150 920 250 940 300 960 C380 1040 430 1100 470 1180 L500 1306" fill="none" stroke="#7d98b8" stroke-width="5" stroke-dasharray="9 22" stroke-linecap="round"/><path d="M0 1050 C100 1020 220 990 300 945" fill="none" stroke="#d8d99a" stroke-width="36" stroke-linecap="round" stroke-linejoin="round"/><path d="M0 1050 C100 1020 220 990 300 945" fill="none" stroke="#f7fabf" stroke-width="31" stroke-linecap="round" stroke-linejoin="round"/><path d="M560 1220 L640 1160 L760 1306" fill="none" stroke="#d9b27c" stroke-width="28" stroke-linecap="round" stroke-linejoin="round"/><path d="M560 1220 L640 1160 L760 1306" fill="none" stroke="#fcd6a4" stroke-width="22" stroke-linecap="round" stroke-linejoin="round"/><path d="M200 1306 L440 1100 C500 1070 580 1070 620 1110 L800 1306" fill="none" stroke="#666" stroke-width="16" stroke-linejoin="round"/><path d="M200 1306 L440 1100 C500 1070 580 1070 620 1110 L800 1306" fill="none" stroke="#b9b9b9" stroke-width="4" stroke-dasharray="26 40" stroke-linejoin="round"/><path d="M230 1306 L460 1110" fill="none" stroke="#666" stroke-width="12" stroke-linejoin="round"/><path d="M230 1306 L460 1110" fill="none" stroke="#b9b9b9" stroke-width="3" stroke-dasharray="26 40" stroke-linejoin="round"/><path d="M470 1100 C480 1050 540 1050 540 1085" fill="none" stroke="#6b6b6b" stroke-width="6"/><rect x="735" y="1228" width="42" height="42" fill="#5b6aa8"/><path d="M1305 800 C1290 770 1340 770 1350 790 C1370 740 1400 730 1390 770 C1380 800 1360 790 1350 790 C1340 820 1310 820 1305 800Z" fill="none" stroke="#444" stroke-width="11"/><g transform="translate(1970,70)" fill="none" stroke="#8fb583" stroke-width="5"><ellipse cx="-18" cy="-12" rx="11" ry="16"/><path d="M-18 4 V34"/><path d="M18 -30 L5 12 H31 Z M18 12 V34"/></g><g transform="translate(2260,165)" fill="none" stroke="#8fb583" stroke-width="5"><ellipse cx="-18" cy="-12" rx="11" ry="16"/><path d="M-18 4 V34"/><path d="M18 -30 L5 12 H31 Z M18 12 V34"/></g><g transform="translate(2065,310)" fill="none" stroke="#8fb583" stroke-width="5"><ellipse cx="-18" cy="-12" rx="11" ry="16"/><path d="M-18 4 V34"/><path d="M18 -30 L5 12 H31 Z M18 12 V34"/></g><g transform="translate(1845,395)" fill="none" stroke="#8fb583" stroke-width="5"><ellipse cx="-18" cy="-12" rx="11" ry="16"/><path d="M-18 4 V34"/><path d="M18 -30 L5 12 H31 Z M18 12 V34"/></g><g transform="translate(2320,380)" fill="none" stroke="#8fb583" stroke-width="5"><ellipse cx="-18" cy="-12" rx="11" ry="16"/><path d="M-18 4 V34"/><path d="M18 -30 L5 12 H31 Z M18 12 V34"/></g><g transform="translate(2000,545)" fill="none" stroke="#8fb583" stroke-width="5"><ellipse cx="-18" cy="-12" rx="11" ry="16"/><path d="M-18 4 V34"/><path d="M18 -30 L5 12 H31 Z M18 12 V34"/></g><g transform="translate(2320,635)" fill="none" stroke="#8fb583" stroke-width="5"><ellipse cx="-18" cy="-12" rx="11" ry="16"/><path d="M-18 4 V34"/><path d="M18 -30 L5 12 H31 Z M18 12 V34"/></g><g transform="translate(2110,715)" fill="none" stroke="#8fb583" stroke-width="5"><ellipse cx="-18" cy="-12" rx="11" ry="16"/><path d="M-18 4 V34"/><path d="M18 -30 L5 12 H31 Z M18 12 V34"/></g><g transform="translate(1900,865)" fill="none" stroke="#8fb583" stroke-width="5"><ellipse cx="-18" cy="-12" rx="11" ry="16"/><path d="M-18 4 V34"/><path d="M18 -30 L5 12 H31 Z M18 12 V34"/></g><g transform="translate(1670,895)" fill="none" stroke="#8fb583" stroke-width="5"><ellipse cx="-18" cy="-12" rx="11" ry="16"/><path d="M-18 4 V34"/><path d="M18 -30 L5 12 H31 Z M18 12 V34"/></g><g transform="translate(2360,855)" fill="none" stroke="#8fb583" stroke-width="5"><ellipse cx="-18" cy="-12" rx="11" ry="16"/><path d="M-18 4 V34"/><path d="M18 -30 L5 12 H31 Z M18 12 V34"/></g><g transform="translate(2130,1000)" fill="none" stroke="#8fb583" stroke-width="5"><ellipse cx="-18" cy="-12" rx="11" ry="16"/><path d="M-18 4 V34"/><path d="M18 -30 L5 12 H31 Z M18 12 V34"/></g><g transform="translate(1545,1085)" fill="none" stroke="#8fb583" stroke-width="5"><ellipse cx="-18" cy="-12" rx="11" ry="16"/><path d="M-18 4 V34"/><path d="M18 -30 L5 12 H31 Z M18 12 V34"/></g><g transform="translate(1820,1095)" fill="none" stroke="#8fb583" stroke-width="5"><ellipse cx="-18" cy="-12" rx="11" ry="16"/><path d="M-18 4 V34"/><path d="M18 -30 L5 12 H31 Z M18 12 V34"/></g><g transform="translate(2300,1125)" fill="none" stroke="#8fb583" stroke-width="5"><ellipse cx="-18" cy="-12" rx="11" ry="16"/><path d="M-18 4 V34"/><path d="M18 -30 L5 12 H31 Z M18 12 V34"/></g><g transform="translate(2045,1195)" fill="none" stroke="#8fb583" stroke-width="5"><ellipse cx="-18" cy="-12" rx="11" ry="16"/><path d="M-18 4 V34"/><path d="M18 -30 L5 12 H31 Z M18 12 V34"/></g><path d="M2320 1158 L2348 1203 H2292Z" fill="#d08f55"/></g>
<g transform="translate(2020,1804) scale(0.26804)"><path d="M0 385 L145 400 L75 830 L150 850 M200 410 L330 430 L540 460 L600 80 M30 1170 L330 1230" fill="none" stroke="#a89bb0" stroke-width="7" stroke-dasharray="9 22" stroke-linecap="round"/><path d="M1600 60 L1580 190 L1910 245 L1935 110 L2190 150 L2195 110 L2375 135 L2345 310 L2425 330" fill="none" stroke="#b7a9c4" stroke-width="7" stroke-dasharray="9 22" stroke-linecap="round"/><path d="M830 140 L720 820 C700 860 660 890 620 920 L540 930 C510 900 500 850 495 790" fill="none" stroke="#bcbbb9" stroke-width="19" stroke-linecap="round" stroke-linejoin="round"/><path d="M830 140 L720 820 C700 860 660 890 620 920 L540 930 C510 900 500 850 495 790" fill="none" stroke="#fff" stroke-width="13" stroke-linecap="round" stroke-linejoin="round"/><path d="M540 930 C480 980 420 1060 380 1140 C360 1200 350 1250 350 1306" fill="none" stroke="#bcbbb9" stroke-width="19" stroke-linecap="round" stroke-linejoin="round"/><path d="M540 930 C480 980 420 1060 380 1140 C360 1200 350 1250 350 1306" fill="none" stroke="#fff" stroke-width="13" stroke-linecap="round" stroke-linejoin="round"/><path d="M660 910 C720 915 760 920 800 945 C880 990 930 1010 960 1040 L1040 1130 L1330 1306 M1040 1130 L930 1306" fill="none" stroke="#bcbbb9" stroke-width="17" stroke-linecap="round" stroke-linejoin="round"/><path d="M660 910 C720 915 760 920 800 945 C880 990 930 1010 960 1040 L1040 1130 L1330 1306 M1040 1130 L930 1306" fill="none" stroke="#fff" stroke-width="11" stroke-linecap="round" stroke-linejoin="round"/><path d="M1340 745 L1265 880 C1255 920 1270 940 1300 995 M1270 940 L1210 980" fill="none" stroke="#bcbbb9" stroke-width="17" stroke-linecap="round" stroke-linejoin="round"/><path d="M1340 745 L1265 880 C1255 920 1270 940 1300 995 M1270 940 L1210 980" fill="none" stroke="#fff" stroke-width="11" stroke-linecap="round" stroke-linejoin="round"/><path d="M905 42 L915 140 L895 190" fill="none" stroke="#bcbbb9" stroke-width="22" stroke-linecap="round" stroke-linejoin="round"/><path d="M905 42 L915 140 L895 190" fill="none" stroke="#fff" stroke-width="16" stroke-linecap="round" stroke-linejoin="round"/><path d="M2150 1215 L2425 1225" fill="none" stroke="#bcbbb9" stroke-width="15" stroke-linecap="round" stroke-linejoin="round"/><path d="M2150 1215 L2425 1225" fill="none" stroke="#fff" stroke-width="10" stroke-linecap="round" stroke-linejoin="round"/><path d="M530 42 C580 70 700 80 800 100 C850 130 900 200 930 250 C950 320 970 360 990 390 L1180 640 L1460 790 C1490 810 1480 860 1475 900 L1450 1010 C1450 1060 1470 1070 1500 1075 L1780 1110 L1890 1160 L1960 1148 L2150 1190" fill="none" stroke="#bcbbb9" stroke-width="29" stroke-linecap="round" stroke-linejoin="round"/><path d="M530 42 C580 70 700 80 800 100 C850 130 900 200 930 250 C950 320 970 360 990 390 L1180 640 L1460 790 C1490 810 1480 860 1475 900 L1450 1010 C1450 1060 1470 1070 1500 1075 L1780 1110 L1890 1160 L1960 1148 L2150 1190" fill="none" stroke="#fff" stroke-width="21" stroke-linecap="round" stroke-linejoin="round"/><path d="M1000 385 C1020 360 1100 355 1280 355 C1450 380 1600 410 1700 432 L2425 550" fill="none" stroke="#bcbbb9" stroke-width="29" stroke-linecap="round" stroke-linejoin="round"/><path d="M1000 385 C1020 360 1100 355 1280 355 C1450 380 1600 410 1700 432 L2425 550" fill="none" stroke="#fff" stroke-width="21" stroke-linecap="round" stroke-linejoin="round"/><path d="M2425 1200 L2330 1306" fill="none" stroke="#666" stroke-width="12" stroke-linejoin="round"/><path d="M2425 1200 L2330 1306" fill="none" stroke="#b9b9b9" stroke-width="3" stroke-dasharray="26 40" stroke-linejoin="round"/><g transform="translate(75,70)" fill="none" stroke="#8fb583" stroke-width="5"><ellipse cx="-18" cy="-12" rx="11" ry="16"/><path d="M-18 4 V34"/><path d="M18 -30 L5 12 H31 Z M18 12 V34"/></g><g transform="translate(140,305)" fill="none" stroke="#8fb583" stroke-width="5"><ellipse cx="-18" cy="-12" rx="11" ry="16"/><path d="M-18 4 V34"/><path d="M18 -30 L5 12 H31 Z M18 12 V34"/></g><g transform="translate(170,540)" fill="none" stroke="#8fb583" stroke-width="5"><ellipse cx="-18" cy="-12" rx="11" ry="16"/><path d="M-18 4 V34"/><path d="M18 -30 L5 12 H31 Z M18 12 V34"/></g><g transform="translate(410,670)" fill="none" stroke="#8fb583" stroke-width="5"><ellipse cx="-18" cy="-12" rx="11" ry="16"/><path d="M-18 4 V34"/><path d="M18 -30 L5 12 H31 Z M18 12 V34"/></g><g transform="translate(195,775)" fill="none" stroke="#8fb583" stroke-width="5"><ellipse cx="-18" cy="-12" rx="11" ry="16"/><path d="M-18 4 V34"/><path d="M18 -30 L5 12 H31 Z M18 12 V34"/></g><g transform="translate(410,930)" fill="none" stroke="#8fb583" stroke-width="5"><ellipse cx="-18" cy="-12" rx="11" ry="16"/><path d="M-18 4 V34"/><path d="M18 -30 L5 12 H31 Z M18 12 V34"/></g><g transform="translate(165,1015)" fill="none" stroke="#8fb583" stroke-width="5"><ellipse cx="-18" cy="-12" rx="11" ry="16"/><path d="M-18 4 V34"/><path d="M18 -30 L5 12 H31 Z M18 12 V34"/></g><g transform="translate(120,1290)" fill="none" stroke="#8fb583" stroke-width="5"><ellipse cx="-18" cy="-12" rx="11" ry="16"/><path d="M-18 4 V34"/><path d="M18 -30 L5 12 H31 Z M18 12 V34"/></g></g>
<g transform="translate(2660,1804) scale(0.26804)"><path d="M0 330 L190 355 M170 700 L150 900 L130 960 M0 1200 L130 1230" fill="none" stroke="#b7a9c4" stroke-width="7" stroke-dasharray="9 22" stroke-linecap="round"/><path d="M1400 46 C1340 40 1300 50 1270 80 C1220 130 1210 170 1205 200 C1195 260 1200 320 1160 375 C1100 400 1040 395 990 420 C940 450 960 480 920 520 C860 590 800 640 700 715 C660 700 620 650 570 655 C540 680 500 660 480 665 C420 670 380 690 350 730 L270 900 C250 950 275 980 260 1030 C250 1080 220 1105 180 1110 C120 1115 90 1150 110 1210 C130 1260 200 1280 250 1310" fill="none" stroke="#aad3df" stroke-width="20" stroke-linecap="round" stroke-linejoin="round"/><path d="M1400 46 C1480 40 1540 80 1600 110 C1680 130 1740 150 1790 172 C1840 165 1880 120 1930 42" fill="none" stroke="#aad3df" stroke-width="20" stroke-linecap="round" stroke-linejoin="round"/><path d="M290 42 L230 400" fill="none" stroke="#bcbbb9" stroke-width="18" stroke-linecap="round" stroke-linejoin="round"/><path d="M290 42 L230 400" fill="none" stroke="#fff" stroke-width="12" stroke-linecap="round" stroke-linejoin="round"/><path d="M170 640 L160 780 L175 880" fill="none" stroke="#bcbbb9" stroke-width="14" stroke-linecap="round" stroke-linejoin="round"/><path d="M170 640 L160 780 L175 880" fill="none" stroke="#fff" stroke-width="9" stroke-linecap="round" stroke-linejoin="round"/><path d="M2200 42 L1650 410" fill="none" stroke="#bcbbb9" stroke-width="16" stroke-linecap="round" stroke-linejoin="round"/><path d="M2200 42 L1650 410" fill="none" stroke="#fff" stroke-width="10" stroke-linecap="round" stroke-linejoin="round"/><path d="M1650 420 L1960 850 M1340 640 L1455 785" fill="none" stroke="#bcbbb9" stroke-width="17" stroke-linecap="round" stroke-linejoin="round"/><path d="M1650 420 L1960 850 M1340 640 L1455 785" fill="none" stroke="#fff" stroke-width="11" stroke-linecap="round" stroke-linejoin="round"/><path d="M1400 42 L1410 90 L1610 370 C1625 390 1630 400 1630 412" fill="none" stroke="#bcbbb9" stroke-width="27" stroke-linecap="round" stroke-linejoin="round"/><path d="M1400 42 L1410 90 L1610 370 C1625 390 1630 400 1630 412" fill="none" stroke="#fff" stroke-width="19" stroke-linecap="round" stroke-linejoin="round"/><path d="M1630 415 L1330 630 L730 1306" fill="none" stroke="#bcbbb9" stroke-width="27" stroke-linecap="round" stroke-linejoin="round"/><path d="M1630 415 L1330 630 L730 1306" fill="none" stroke="#fff" stroke-width="19" stroke-linecap="round" stroke-linejoin="round"/><path d="M-10 545 L140 580 L330 592 L680 555 C740 545 780 520 840 440 L960 250 L1090 42" fill="none" stroke="#bcbbb9" stroke-width="29" stroke-linecap="round" stroke-linejoin="round"/><path d="M-10 545 L140 580 L330 592 L680 555 C740 545 780 520 840 440 L960 250 L1090 42" fill="none" stroke="#fff" stroke-width="21" stroke-linecap="round" stroke-linejoin="round"/><path d="M1125 42 L1005 220 L870 440 C830 500 780 560 700 578 L480 602 C400 620 340 650 295 720 L0 1195" fill="none" stroke="#666" stroke-width="17" stroke-linejoin="round"/><path d="M1125 42 L1005 220 L870 440 C830 500 780 560 700 578 L480 602 C400 620 340 650 295 720 L0 1195" fill="none" stroke="#b9b9b9" stroke-width="5" stroke-dasharray="26 40" stroke-linejoin="round"/><path d="M865 100 L885 150 L910 145 M885 150 L860 190 M910 145 L1000 165" stroke="#c8b46a" stroke-width="5" fill="none" stroke-dasharray="18 14"/></g>
<path d="M2868 1806 L2748.5 1924.6 L2705.6 1975.5 L2660 2037 L2591 2139 L2576 2163" fill="none" stroke="#d8917c" stroke-width="12.5" stroke-linejoin="round"/><path d="M2868 1806 L2748.5 1924.6 L2705.6 1975.5 L2660 2037 L2591 2139 L2576 2163" fill="none" stroke="#f9b29c" stroke-width="10.5" stroke-linejoin="round"/><path d="M1243.4 1812 L1371.5 1948.7 L1460.4 2050.6 L1530.1 2131 L1551.5 2157.8" fill="none" stroke="#d9b27c" stroke-width="9.6" stroke-linejoin="round"/><path d="M1243.4 1812 L1371.5 1948.7 L1460.4 2050.6 L1530.1 2131 L1551.5 2157.8" fill="none" stroke="#fcd6a4" stroke-width="8" stroke-linejoin="round"/>

</g></g>

<g font-family="'DejaVu Sans','Liberation Sans',sans-serif" filter="url(#mblur)" clip-path="url(#mapclip)">
<g stroke="#fff" stroke-width="3" stroke-opacity=".8" paint-order="stroke" stroke-linejoin="round">
<text x="1237" y="2073" font-size="23.3" fill="#333">Taminda</text>
<text x="1433" y="2023" font-size="23.3" fill="#333">North Tamworth</text>
<text x="1963" y="2152" font-size="18" fill="#734a08">Flagstaff</text>
<text x="0" y="0" font-size="12.8" fill="#111" font-weight="bold" transform="translate(1478,2068) rotate(53.4)">Peel Street</text>
<text x="0" y="0" font-size="14" fill="#222" transform="translate(1301,2153) rotate(-40)">Street</text>
<text x="0" y="0" font-size="14" font-weight="bold" fill="#2e1c14" transform="translate(2746.5,1933.5) rotate(-44.8)">v England Highway</text>
<text x="0" y="0" font-size="15.5" font-style="italic" fill="#4d80b3" transform="translate(1136,1815) rotate(62)">River</text>
</g>
<rect x="1264" y="1846" width="52" height="33" rx="4" fill="#fbe3c6" stroke="#d9b38c" stroke-width="1.5"/>
<text x="1290" y="1871" font-size="19" fill="#6b4f2e" text-anchor="middle">B95</text>
<rect x="722" y="2102" width="53" height="33" rx="4" fill="#fbe3c6" stroke="#d9b38c" stroke-width="1.5"/>
<text x="757" y="2127" font-size="19" fill="#6b4f2e" text-anchor="middle">56</text>
<rect x="2549" y="2140" width="54" height="33" rx="4" fill="#f9d4c9" stroke="#c97f6e" stroke-width="1.5"/>
<text x="2576" y="2165" font-size="19" fill="#6b3a2e" text-anchor="middle">A15</text>
</g>

<!-- marker shadow -->
<g clip-path="url(#mapclip)">
<path d="M2724 1988 L2752 1966 L2790 1960 L2766 1976 Z" fill="#000" opacity=".38" filter="url(#sblur)"/>
<path d="M2721 1990.5 C2716 1984 2692 1965 2692 1939.500 C2692 1923 2705 1911.500 2721 1911.500 C2737 1911.500 2750 1923 2750 1939.500 C2750 1965 2726 1984 2721 1990.5Z" fill="#78ab38"/>
<g fill="none" stroke="#fff" stroke-width="3" stroke-linecap="round"><path d="M2705 1932 A22 22 0 0 1 2737 1932"/><path d="M2711 1938.5 A14 14 0 0 1 2731 1938.5"/></g><circle cx="2721" cy="1945" r="3.6" fill="#fff"/>
</g>
<!-- zoom control -->
<rect x="768" y="1837" width="64" height="124" rx="6.5" fill="#fff" stroke="#b8b6b4" stroke-width="4"/>
<path d="M770 1898.500 H830" stroke="#ccc" stroke-width="2"/>
<path d="M788.500 1873 H813 M800.750 1861 V1885.500" stroke="#000" stroke-width="4.6"/>
<path d="M788.500 1933 H813" stroke="#000" stroke-width="4.6"/>

</svg><!--MAP-END-->

<svg style="left:0;top:0" width="3454" height="2154" viewBox="0 0 3454 2154">
<path d="M0 0 H12 A24 24 0 0 0 0 13 Z" fill="#4f86c6" stroke="#14202e" stroke-width="1.5"/>
<path d="M3454 0 H3443 A24 24 0 0 1 3454 20 Z" fill="#5b8dc4" stroke="#14202e" stroke-width="1.5"/>
<path d="M3454 2154 V2133 A24 24 0 0 1 3442 2154 Z" fill="#0b0d12"/>
<path d="M0 2154 V2144 A24 24 0 0 0 8.5 2154 Z" fill="#0b0d12"/>
</svg>
</body>
</html>
